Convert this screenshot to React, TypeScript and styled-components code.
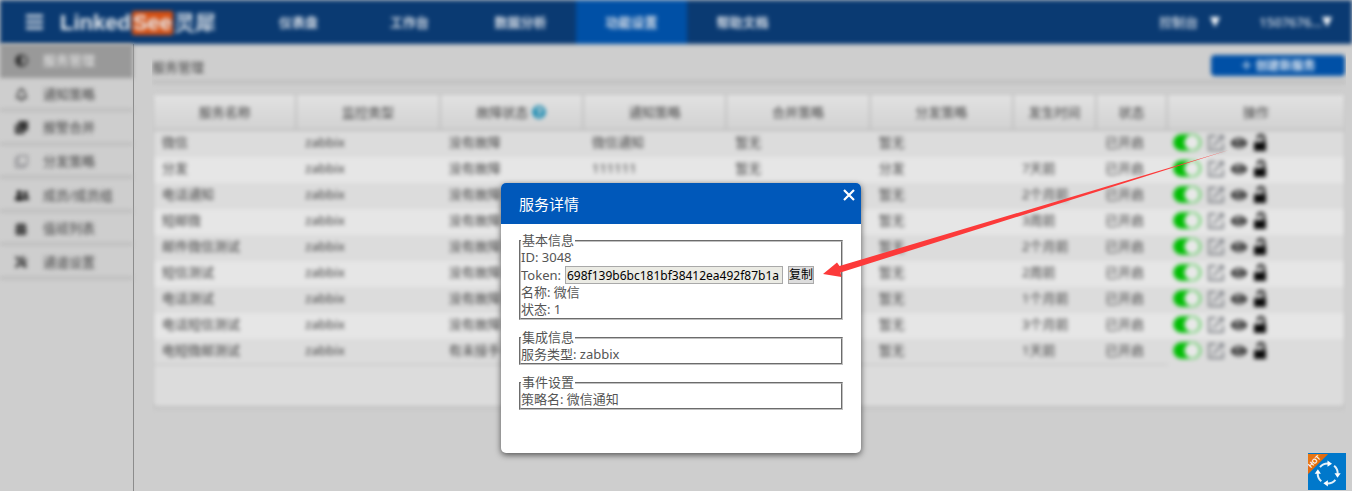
import React from 'react';
import styled, { createGlobalStyle, css } from 'styled-components';
import {
  FaAdjust,
  FaCalendarAlt,
  FaClone,
  FaEye,
  FaRegBell,
  FaRegClone,
  FaTools,
  FaUserFriends,
  FaQuestionCircle,
} from 'react-icons/fa';

const GlobalStyle = createGlobalStyle`
  *, *::before, *::after { box-sizing: border-box; }
  body {
    margin: 0;
    background: #cecece;
    color: #4c4c4c;
    font: 13px/17px "Noto Sans", "Noto Sans CJK SC", sans-serif;
  }
  button, input { font: inherit; }
`;

const softened = css`
  filter: blur(2px);
`;

const Shell = styled.div`
  position: relative;
  display: flex;
  flex-direction: column;
  min-height: 100vh;
  overflow: hidden;
`;

const Header = styled.header`
  ${softened}
  display: flex;
  align-items: stretch;
  height: 44px;
  background: #0a3a72;
  color: #dbe1e9;
`;

const Brand = styled.div`
  display: flex;
  align-items: center;
  flex: 0 0 243px;
  padding-left: 26px;
`;

const PlainButton = styled.button`
  display: inline-flex;
  align-items: center;
  justify-content: center;
  padding: 0;
  border: 0;
  background: none;
  color: inherit;
`;

const Logo = styled.a`
  display: flex;
  align-items: center;
  gap: 1px;
  margin: 2px 0 0 17px;
  color: #e8ecf0;
  font: bold 22px/24px "Liberation Sans", "Noto Sans CJK SC", sans-serif;
  text-decoration: none;
`;

const LogoBadge = styled.span`
  padding: 0 1px;
  border-radius: 2px;
  background: #d65012;
`;

const LogoName = styled.span`
  font-size: 21px;
  font-weight: 500;
`;

const Nav = styled.nav`
  display: flex;
  flex: 1;
`;

const NavLink = styled.a<{ $active?: boolean }>`
  display: flex;
  align-items: center;
  justify-content: center;
  width: 111px;
  background: ${(p) => (p.$active ? '#0050a6' : 'transparent')};
  color: inherit;
  font-weight: bold;
  text-decoration: none;
`;

const Account = styled.div`
  display: flex;
  align-items: center;
  gap: 39px;
  padding-right: 20px;
`;

const AccountButton = styled(PlainButton)<{ $gap: number }>`
  gap: ${(p) => p.$gap}px;
  font-weight: 500;
`;

const Caret = styled.span`
  border: 5px solid transparent;
  border-top: 10px solid #fff;
  border-bottom: 0;
`;

const Body = styled.div`
  display: flex;
  flex: 1;
`;

const Sidebar = styled.aside`
  flex: 0 0 134px;
  border-right: 1px solid #8c8c8c;
`;

const Menu = styled.ul`
  ${softened}
  display: grid;
  grid-auto-rows: 1fr;
  height: 235px;
  margin: 0;
  padding: 0;
  list-style: none;
`;

const MenuItem = styled.li<{ $active?: boolean }>`
  display: flex;
  border-bottom: 2px solid ${(p) => (p.$active ? '#999' : '#b4b4b4')};
  background: ${(p) => (p.$active ? '#999' : 'transparent')};
  color: ${(p) => (p.$active ? '#eee' : '#404040')};
`;

const MenuLink = styled.a`
  display: flex;
  align-items: center;
  gap: 14px;
  flex: 1;
  padding: 2px 0 0 15px;
  color: inherit;
  text-decoration: none;
`;

const MenuIcon = styled.span<{ $color: string }>`
  display: flex;
  width: 14px;
  color: ${(p) => p.$color};
`;

const Main = styled.main`
  flex: 1;
  min-width: 0;
  margin: 0 6px 0 18px;
  overflow: hidden;
`;

const Content = styled.div`
  ${softened}
  color: #404040;
`;

const TitleBar = styled.div`
  display: flex;
  align-items: center;
  justify-content: space-between;
  height: 39px;
  padding: 6px 1px 0 0;
  border-bottom: 2px solid #b4b4b4;
`;

const PageTitle = styled.h1`
  margin: 0;
  padding-top: 4px;
  font-size: 13px;
  font-weight: 400;
`;

const CreateButton = styled.button`
  width: 134px;
  height: 21px;
  padding: 0;
  border: 0;
  border-radius: 4px;
  background: #0050a6;
  color: #e2eaf3;
  font-size: 12px;
  font-weight: bold;
  line-height: 20px;
`;

const Panel = styled.section`
  margin: 11px 1px 8px;
  padding-bottom: 41px;
  border: 1px solid #c5c5c5;
  border-radius: 4px;
  background: #dcdcdc;
  box-shadow: 0 1px 2px #b5b5b5;
`;

const Table = styled.table`
  width: 100%;
  table-layout: fixed;
  border-collapse: separate;
  border-spacing: 0;
`;

const Col = styled.col<{ $width?: number }>`
  width: ${(p) => (p.$width ? `${p.$width}px` : 'auto')};
`;

const HeadCell = styled.th`
  height: 36px;
  padding: 0;
  border-bottom: 2px solid #c0c0c0;
  border-right: 2px solid #c0c0c0;
  background: linear-gradient(#e2e2e2, #d2d2d2);
  font-weight: 400;
  &:last-child { border-right: 0; }
`;

const HeadLabel = styled.span`
  display: inline-flex;
  align-items: center;
  gap: 4px;
`;

const Row = styled.tr`
  &:nth-child(even) { background: #e6e6e6; }
  &:last-child td:not(:last-child) { border-bottom: 1px solid #c0c0c0; }
`;

const Cell = styled.td`
  height: 26px;
  padding: 0 0 3px 8px;
  overflow: hidden;
  white-space: nowrap;
`;

const Actions = styled.div`
  display: flex;
  align-items: center;
`;

const Toggle = styled.input`
  appearance: none;
  width: 28px;
  height: 17px;
  margin: 0 7px 0 -3px;
  border: 1px solid #2fc832;
  border-radius: 9px;
  background: radial-gradient(circle at 18px 50%, #e8e8e8 7px, #02bd05 8px);
`;

const IconButton = styled(PlainButton)<{ $width?: number }>`
  width: ${(p) => p.$width ?? 16}px;
  height: 18px;
  margin-right: 7px;
  color: #111;
`;

const Overlay = styled.div`
  position: absolute;
  inset: 0;
  display: flex;
  align-items: flex-start;
  justify-content: center;
  padding: 183px 0 0 10px;
`;

const Dialog = styled.div`
  position: relative;
  width: 360px;
  min-height: 270px;
  border-radius: 5px;
  background: #fff;
  color: #555;
  box-shadow: 0 2px 6px rgba(0, 0, 0, 0.6);
`;

const DialogHeader = styled.div`
  display: flex;
  align-items: flex-start;
  justify-content: space-between;
  height: 41px;
  padding: 0 6px 0 18px;
  border-radius: 5px 5px 0 0;
  background: #0058ba;
  color: #fff;
`;

const DialogTitle = styled.h2`
  margin: 0;
  font-size: 15px;
  font-weight: 400;
  line-height: 42px;
`;

const CloseButton = styled(PlainButton)`
  width: 12px;
  height: 24px;
`;

const DialogBody = styled.div`
  display: flex;
  flex-direction: column;
  gap: 9px;
  padding: 8px 18px;
`;

const Group = styled.fieldset`
  min-width: 0;
  margin: 0;
  padding: 0;
  border: 2px groove #c0c0c0;
`;

const Legend = styled.legend`
  padding: 0 1px;
`;

const Line = styled.div`
  height: 17px;
  white-space: nowrap;
`;

const TokenLine = styled.div`
  display: flex;
  align-items: center;
  height: 18px;
`;

const TokenInput = styled.input`
  width: 218px;
  height: 18px;
  margin: 0 5px 0 4px;
  padding: 0 1px;
  border: 1px solid #a9a9a9;
  background: #ebebe4;
  color: #000;
  font-size: 12px;
`;

const CopyButton = styled.button`
  width: 26px;
  height: 18px;
  padding: 0;
  border: 1px solid #a9a9a9;
  background: #ddd;
  color: #000;
  font-size: 12px;
  line-height: 16px;
`;

const Pointer = styled.svg`
  position: absolute;
  top: -35px;
  left: 320px;
  pointer-events: none;
`;

const HotButton = styled(PlainButton)`
  position: fixed;
  right: 6px;
  bottom: 1px;
  width: 38px;
  height: 37px;
  background: #0078cb;
`;

const MENU = [
  { label: '服务管理', icon: <FaAdjust size={13} />, color: '#333' },
  { label: '通知策略', icon: <FaRegBell size={13} />, color: '#222' },
  { label: '报警合并', icon: <FaClone size={13} />, color: '#333' },
  { label: '分发策略', icon: <FaRegClone size={13} />, color: '#808085' },
  { label: '成员/成员组', icon: <FaUserFriends size={15} />, color: '#000' },
  { label: '值班列表', icon: <FaCalendarAlt size={12} />, color: '#222' },
  { label: '通道设置', icon: <FaTools size={12} />, color: '#333' },
];

const NAV = ['仪表盘', '工作台', '数据分析', '功能设置', '帮助文档'];

const COLUMNS = ['服务名称', '监控类型', '故障状态', '通知策略', '合并策略', '分发策略', '发生时间', '状态', '操作'];
const WIDTHS = [0, 0, 0, 0, 0, 0, 83, 71, 176];

const ROWS = [
  ['微信', 'zabbix', '没有故障', '微信通知', '暂无', '暂无', '', '已开启'],
  ['分发', 'zabbix', '没有故障', '111111', '暂无', '分发', '7天前', '已开启'],
  ['电话通知', 'zabbix', '没有故障', '', '', '暂无', '2个月前', '已开启'],
  ['短邮微', 'zabbix', '没有故障', '', '', '暂无', '3周前', '已开启'],
  ['邮件微信测试', 'zabbix', '没有故障', '', '', '暂无', '2个月前', '已开启'],
  ['短信测试', 'zabbix', '没有故障', '', '', '暂无', '2周前', '已开启'],
  ['电话测试', 'zabbix', '没有故障', '', '', '暂无', '1个月前', '已开启'],
  ['电话短信测试', 'zabbix', '没有故障', '', '', '暂无', '3个月前', '已开启'],
  ['电短微邮测试', 'zabbix', '有未接手', '', '', '暂无', '1天前', '已开启'],
];

const MenuBars = () => (
  <svg width="17" height="16" viewBox="0 0 17 16" fill="none" stroke="#d4dce6" strokeWidth="3">
    <path d="M0 2h17M0 8h17M0 14h17" />
  </svg>
);

const EditIcon = () => (
  <svg width="16" height="16" viewBox="0 0 16 16" fill="none" stroke="#7c7f85" strokeWidth="1.8">
    <path d="M8 1H1v14h14V8M5 11l9-9M11 1h4v4" />
  </svg>
);

const UnlockIcon = () => (
  <svg width="12" height="17" viewBox="0 0 12 17">
    <path d="M4 5V3.500a3 2.500 0 0 1 6 0V9" fill="none" stroke="#222" strokeWidth="2.500" />
    <path d="M0 8h12v9H0z" fill="#0a0a0a" />
  </svg>
);

const CycleIcon = () => (
  <svg width="38" height="37" viewBox="0 0 38 37">
    <path d="M0 1h20L0 21z" fill="#e87511" />
    <path d="M14 1h6L0 21v-6z" fill="#dc5f0c" opacity="0.5" />
    <text x="6" y="11" fill="#fff" fontFamily="Liberation Sans, sans-serif" fontSize="7" fontWeight="bold" textAnchor="middle" transform="rotate(-45 6 8)">HOT</text>
    {[0, 90, 180, 270].map((angle) => (
      <g key={angle} transform={`rotate(${angle} 19.700 20.500)`}>
        <path d="M12 14.100A10 10 0 0 1 20 10.500" fill="none" stroke="#e3f0f9" strokeWidth="2" />
        <path d="M19.500 7.500l4.500 3.200-4.500 3z" fill="#fff" />
      </g>
    ))}
  </svg>
);

export default function App() {
  return (
    <Shell>
      <GlobalStyle />
      <Header>
        <Brand>
          <PlainButton aria-label="菜单"><MenuBars /></PlainButton>
          <Logo href="#">
            <span>Linked</span>
            <LogoBadge>See</LogoBadge>
            <LogoName>灵犀</LogoName>
          </Logo>
        </Brand>
        <Nav>
          {NAV.map((item) => (
            <NavLink key={item} href="#" $active={item === '功能设置'}>{item}</NavLink>
          ))}
        </Nav>
        <Account>
          <AccountButton $gap={12}>控制台 <Caret /></AccountButton>
          <AccountButton $gap={0}>1507676... <Caret /></AccountButton>
        </Account>
      </Header>
      <Body>
        <Sidebar>
          <Menu>
            {MENU.map((item, i) => (
              <MenuItem key={item.label} $active={i === 0}>
                <MenuLink href="#">
                  <MenuIcon $color={item.color}>{item.icon}</MenuIcon>
                  {item.label}
                </MenuLink>
              </MenuItem>
            ))}
          </Menu>
        </Sidebar>
        <Main>
          <Content>
            <TitleBar>
              <PageTitle>服务管理</PageTitle>
              <CreateButton>＋ 创建新服务</CreateButton>
            </TitleBar>
            <Panel>
              <Table>
                <colgroup>
                  {WIDTHS.map((w, i) => <Col key={i} $width={w} />)}
                </colgroup>
                <thead>
                  <tr>
                    {COLUMNS.map((name) => (
                      <HeadCell key={name}>
                        <HeadLabel>
                          {name}
                          {name === '故障状态' && <FaQuestionCircle size={14} color="#1f8db3" />}
                        </HeadLabel>
                      </HeadCell>
                    ))}
                  </tr>
                </thead>
                <tbody>
                  {ROWS.map((row) => (
                    <Row key={row[0]}>
                      {row.map((value, i) => <Cell key={i}>{value}</Cell>)}
                      <Cell>
                        <Actions>
                          <Toggle type="checkbox" defaultChecked aria-label={`启用 ${row[0]}`} />
                          <IconButton aria-label="编辑"><EditIcon /></IconButton>
                          <IconButton aria-label="查看"><FaEye size={16} /></IconButton>
                          <IconButton $width={12} aria-label="解锁"><UnlockIcon /></IconButton>
                        </Actions>
                      </Cell>
                    </Row>
                  ))}
                </tbody>
              </Table>
            </Panel>
          </Content>
        </Main>
      </Body>

      <Overlay>
        <Dialog role="dialog" aria-labelledby="dialog-title">
          <DialogHeader>
            <DialogTitle id="dialog-title">服务详情</DialogTitle>
            <CloseButton aria-label="关闭">
              <svg width="12" height="12" viewBox="0 0 12 12" stroke="#fff" strokeWidth="2.200">
                <path d="M1 1l10 10M11 1L1 11" />
              </svg>
            </CloseButton>
          </DialogHeader>
          <DialogBody>
            <Group>
              <Legend>基本信息</Legend>
              <Line>ID: 3048</Line>
              <TokenLine>
                <label htmlFor="token">Token:</label>
                <TokenInput id="token" readOnly value="698f139b6bc181bf38412ea492f87b1a" />
                <CopyButton>复制</CopyButton>
              </TokenLine>
              <Line>名称: 微信</Line>
              <Line>状态: 1</Line>
            </Group>
            <Group>
              <Legend>集成信息</Legend>
              <Line>服务类型: zabbix</Line>
            </Group>
            <Group>
              <Legend>事件设置</Legend>
              <Line>策略名: 微信通知</Line>
            </Group>
          </DialogBody>
          <Pointer width="412" height="132" viewBox="0 0 412 132" aria-hidden="true">
            <path d="M2 126L16 114.500L18.500 118L408 2L19.500 124.500L20.500 129z" fill="#fc3a3a" />
          </Pointer>
        </Dialog>
      </Overlay>
      <HotButton aria-label="热门"><CycleIcon /></HotButton>
    </Shell>
  );
}
